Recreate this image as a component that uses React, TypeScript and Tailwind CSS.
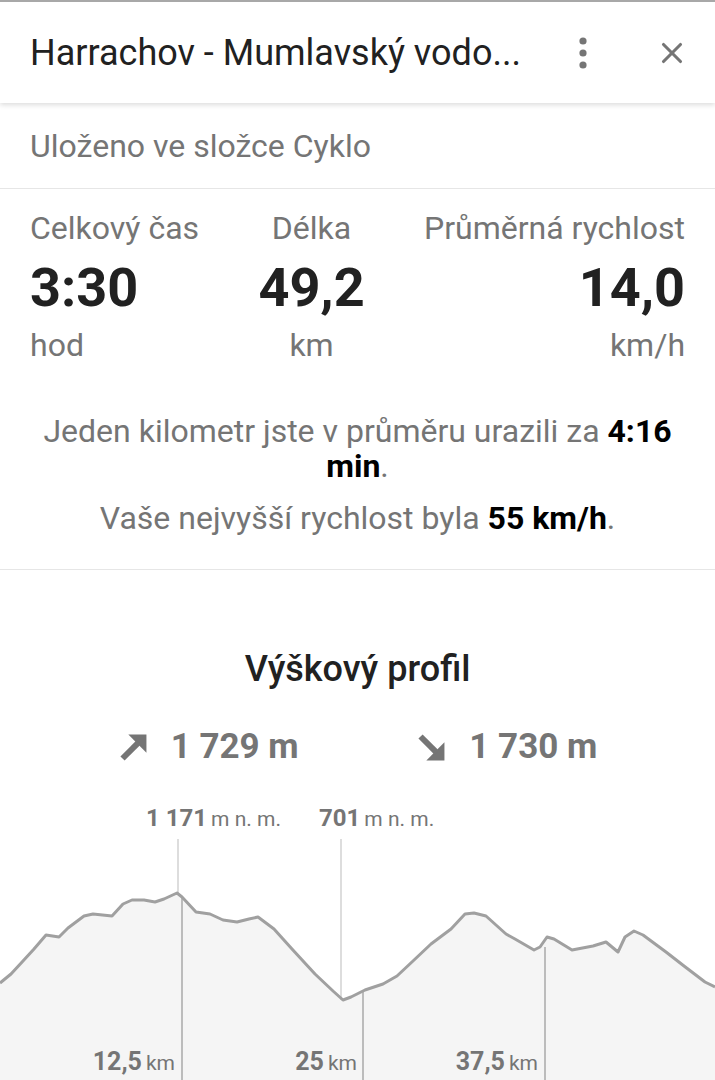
import { X } from 'lucide-react';

// elevation profile points, in page pixels (x: 0..715, y: absolute)
const profile: [number, number][] = [
  [0, 984], [11, 975], [23, 962], [34, 950], [46, 936], [59, 938], [68, 929], [84, 917],
  [93, 915], [112, 917], [123, 905], [132, 901], [144, 901], [155, 903], [164, 900],
  [177, 894], [182, 898], [196, 913], [210, 915], [223, 921], [237, 923], [249, 920],
  [258, 918], [274, 930], [292, 950], [315, 975], [333, 992], [343, 1001], [351, 998],
  [365, 991], [383, 985], [397, 977], [413, 962], [431, 945], [451, 930], [465, 915],
  [474, 914], [486, 917], [506, 935], [515, 940], [534, 951], [540, 948], [547, 938],
  [554, 940], [572, 951], [593, 947], [606, 943], [618, 953], [625, 938], [634, 932],
  [643, 936], [666, 953], [684, 967], [705, 983], [715, 988],
];

const line = profile.map(([x, y], i) => `${i ? 'L' : 'M'}${x},${y}`).join(' ');
const area = `${line} L715,1100 L0,1100 Z`;

function Kebab() {
  return (
    <svg width="12" height="34" viewBox="0 0 12 34" className="text-[#757575]">
      <circle cx="6" cy="5" r="3.6" fill="currentColor" />
      <circle cx="6" cy="17" r="3.6" fill="currentColor" />
      <circle cx="6" cy="29" r="3.6" fill="currentColor" />
    </svg>
  );
}

function ArrowUp() {
  return (
    <svg width="31" height="31" viewBox="0 0 24 24" className="text-[#757575]">
      <polygon points="22,2 22,16 8,2" fill="currentColor" />
      <line x1="3.5" y1="20.5" x2="16" y2="8" stroke="currentColor" strokeWidth="4.6" />
    </svg>
  );
}

function ArrowDown() {
  return (
    <svg width="31" height="31" viewBox="0 0 24 24" className="text-[#757575]">
      <polygon points="22,22 22,8 8,22" fill="currentColor" />
      <line x1="3.5" y1="3.5" x2="16" y2="16" stroke="currentColor" strokeWidth="4.6" />
    </svg>
  );
}

export default function App() {
  return (
    <div className="w-[715px] h-[1080px] overflow-hidden bg-white border-t-2 border-[#a8a8a8] font-['Roboto',sans-serif]">
      {/* header */}
      <header className="relative z-10 h-[101px] flex items-center pl-[30px] pr-[26px] bg-white shadow-[0_2px_5px_rgba(0,0,0,0.14)]">
        <h1 className="flex-1 text-[36px] text-[#212121] whitespace-nowrap">Harrachov - Mumlavský vodo...</h1>
        <div className="mr-[66px]"><Kebab /></div>
        <X className="w-[34px] h-[34px] text-[#757575]" strokeWidth={2.2} />
      </header>

      <div className="h-[86px] flex items-center px-[30px] border-b border-[#e6e6e6]">
        <span className="text-[32px] text-[#757575]">Uloženo ve složce Cyklo</span>
      </div>

      {/* stats */}
      <section className="px-[30px] pt-[21px] pb-[33px] border-b border-[#e6e6e6]">
        <div className="flex justify-between">
          <div className="flex flex-col">
            <span className="text-[32px] leading-[36px] text-[#757575]">Celkový čas</span>
            <span className="mt-[12px] text-[54px] leading-[60px] font-bold text-[#212121]">3:30</span>
            <span className="mt-[9px] text-[32px] leading-[36px] text-[#757575]">hod</span>
          </div>
          <div className="flex flex-col items-center">
            <span className="text-[32px] leading-[36px] text-[#757575]">Délka</span>
            <span className="mt-[12px] text-[54px] leading-[60px] font-bold text-[#212121]">49,2</span>
            <span className="mt-[9px] text-[32px] leading-[36px] text-[#757575]">km</span>
          </div>
          <div className="flex flex-col items-end">
            <span className="text-[32px] leading-[36px] text-[#757575]">Průměrná rychlost</span>
            <span className="mt-[12px] text-[54px] leading-[60px] font-bold text-[#212121]">14,0</span>
            <span className="mt-[9px] text-[32px] leading-[36px] text-[#757575]">km/h</span>
          </div>
        </div>
        <p className="mt-[51px] text-center text-[32px] leading-[35px] text-[#757575]">
          Jeden kilometr jste v průměru urazili za <b className="text-black">4:16 min</b>.
        </p>
        <p className="mt-[17px] text-center text-[32px] leading-[35px] text-[#757575]">
          Vaše nejvyšší rychlost byla <b className="text-black">55 km/h</b>.
        </p>
      </section>

      {/* elevation */}
      <section className="pt-[79px]">
        <h2 className="text-center text-[36px] leading-[40px] font-medium text-[#212121]">Výškový profil</h2>
        <div className="mt-[38px] flex justify-evenly">
          <div className="flex items-center gap-[22px]">
            <ArrowUp />
            <span className="text-[35px] leading-[40px] font-bold text-[#757575]">1 729 m</span>
          </div>
          <div className="flex items-center gap-[22px]">
            <ArrowDown />
            <span className="text-[35px] leading-[40px] font-bold text-[#757575]">1 730 m</span>
          </div>
        </div>

        <div className="relative mt-[22px] h-[310px]">
          <svg width="715" height="310" viewBox="0 790 715 310" className="block">
            <path d={area} fill="#f5f5f5" />
            <line x1="178" y1="840" x2="178" y2="894" stroke="#d2d2d2" strokeWidth="1.5" />
            <line x1="341" y1="840" x2="341" y2="1001" stroke="#d2d2d2" strokeWidth="1.5" />
            <line x1="182" y1="898" x2="182" y2="1100" stroke="#a8a8a8" strokeWidth="1.5" />
            <line x1="363" y1="991" x2="363" y2="1100" stroke="#a8a8a8" strokeWidth="1.5" />
            <line x1="545" y1="948" x2="545" y2="1100" stroke="#a8a8a8" strokeWidth="1.5" />
            <path d={line} fill="none" stroke="#a0a0a0" strokeWidth="3" strokeLinejoin="round" />
          </svg>

          <div className="absolute top-[15px] left-[146px] leading-[28px] text-[#757575] whitespace-nowrap">
            <span className="text-[24px] font-bold">1 171</span> <span className="text-[21px]">m n. m.</span>
          </div>
          <div className="absolute top-[15px] left-[319px] leading-[28px] text-[#757575] whitespace-nowrap">
            <span className="text-[24px] font-bold">701</span> <span className="text-[21px]">m n. m.</span>
          </div>

          <div className="absolute top-[259px] right-[540px] leading-[28px] text-[#757575] whitespace-nowrap">
            <span className="text-[25px] font-bold">12,5</span> <span className="text-[21px]">km</span>
          </div>
          <div className="absolute top-[259px] right-[358px] leading-[28px] text-[#757575] whitespace-nowrap">
            <span className="text-[25px] font-bold">25</span> <span className="text-[21px]">km</span>
          </div>
          <div className="absolute top-[259px] right-[177px] leading-[28px] text-[#757575] whitespace-nowrap">
            <span className="text-[25px] font-bold">37,5</span> <span className="text-[21px]">km</span>
          </div>
        </div>
      </section>
    </div>
  );
}
